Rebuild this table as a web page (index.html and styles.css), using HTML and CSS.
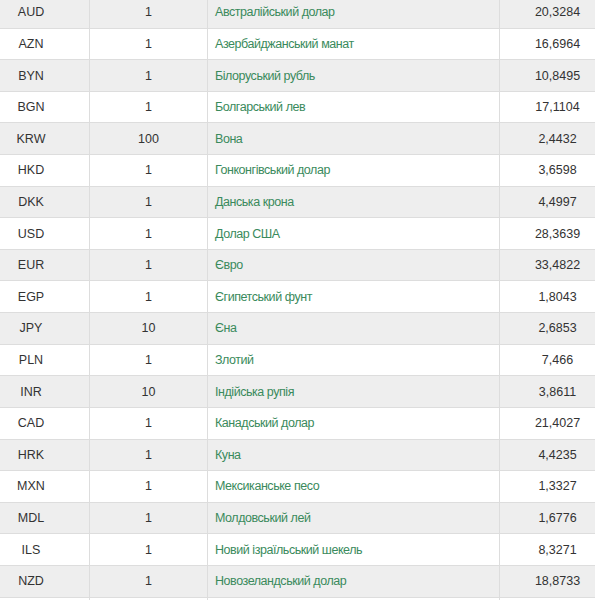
FILE: index.html
```html
<!DOCTYPE html>
<html lang="uk">
<head>
<meta charset="utf-8">
<link rel="stylesheet" href="styles.css">
</head>
<body>
<div class="wrap">
<table class="rates">
<colgroup><col class="c1"><col class="c2"><col class="c3"><col class="c4"></colgroup>
<tbody>
<tr><td>AUD</td><td>1</td><td class="name"><a>Австралійський долар</a></td><td>20,3284</td></tr>
<tr><td>AZN</td><td>1</td><td class="name"><a>Азербайджанський манат</a></td><td>16,6964</td></tr>
<tr><td>BYN</td><td>1</td><td class="name"><a>Білоруський рубль</a></td><td>10,8495</td></tr>
<tr><td>BGN</td><td>1</td><td class="name"><a>Болгарський лев</a></td><td>17,1104</td></tr>
<tr><td>KRW</td><td>100</td><td class="name"><a>Вона</a></td><td>2,4432</td></tr>
<tr><td>HKD</td><td>1</td><td class="name"><a>Гонконгівський долар</a></td><td>3,6598</td></tr>
<tr><td>DKK</td><td>1</td><td class="name"><a>Данська крона</a></td><td>4,4997</td></tr>
<tr><td>USD</td><td>1</td><td class="name"><a>Долар США</a></td><td>28,3639</td></tr>
<tr><td>EUR</td><td>1</td><td class="name"><a>Євро</a></td><td>33,4822</td></tr>
<tr><td>EGP</td><td>1</td><td class="name"><a>Єгипетський фунт</a></td><td>1,8043</td></tr>
<tr><td>JPY</td><td>10</td><td class="name"><a>Єна</a></td><td>2,6853</td></tr>
<tr><td>PLN</td><td>1</td><td class="name"><a>Злотий</a></td><td>7,466</td></tr>
<tr><td>INR</td><td>10</td><td class="name"><a>Індійська рупія</a></td><td>3,8611</td></tr>
<tr><td>CAD</td><td>1</td><td class="name"><a>Канадський долар</a></td><td>21,4027</td></tr>
<tr><td>HRK</td><td>1</td><td class="name"><a>Куна</a></td><td>4,4235</td></tr>
<tr><td>MXN</td><td>1</td><td class="name"><a>Мексиканське песо</a></td><td>1,3327</td></tr>
<tr><td>MDL</td><td>1</td><td class="name"><a>Молдовський лей</a></td><td>1,6776</td></tr>
<tr><td>ILS</td><td>1</td><td class="name"><a>Новий ізраїльський шекель</a></td><td>8,3271</td></tr>
<tr><td>NZD</td><td>1</td><td class="name"><a>Новозеландський долар</a></td><td>18,8733</td></tr>
<tr class="tail"><td></td><td></td><td class="name"></td><td></td></tr>
</tbody>
</table>
</div>
</body>
</html>
```
FILE: styles.css
```css
html, body {
  margin: 0;
  padding: 0;
  background: #fff;
  overflow: hidden;
}
.wrap {
  width: 595px;
  height: 600px;
  overflow: hidden;
}
.rates {
  border-collapse: collapse;
  table-layout: fixed;
  width: 643px;
  margin: -4px 0 0 -28px;
  font-family: "Liberation Sans", Arial, sans-serif;
  font-size: 12.5px;
  color: #333;
}
.c1 { width: 117px; }
.c2 { width: 118px; }
.c3 { width: 292px; }
.c4 { width: 116px; }
.rates td {
  height: 31.62px;
  padding: 0 7px;
  box-sizing: border-box;
  border: 1px solid #ddd;
  text-align: center;
  vertical-align: middle;
}
.rates td.name {
  text-align: left;
}
.rates a {
  color: #3a8a5c;
  text-decoration: none;
  letter-spacing: -0.45px;
}
.rates tr:nth-child(odd) td {
  background: #eeeeee;
}
```
